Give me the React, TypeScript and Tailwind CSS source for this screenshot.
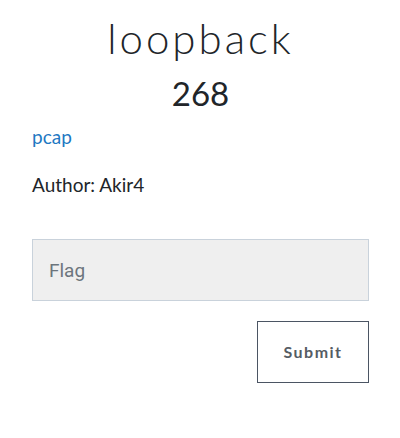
export default function App() {
  return (
    <div className="w-[400px] h-[438px] bg-white pl-8 pr-[31px] pt-[12px] font-['Lato','Liberation_Sans',sans-serif] text-[#212529]">
      <h1 className="text-center text-[42px] font-light tracking-[3px] leading-[52px]">loopback</h1>
      <h2 className="text-center text-[33px] font-normal leading-[40px] mt-[9px]">268</h2>
      <a href="#" className="block mt-[10px] text-[19px] leading-[28px] text-[#1e78c2]">pcap</a>
      <p className="mt-[20px] text-[19px] leading-[28px]">Author: Akir4</p>
      <form className="mt-[40px]" onSubmit={e => e.preventDefault()}>
        <input
          placeholder="Flag"
          className="w-full h-[62px] bg-[#efefef] border border-[#c9d2db] px-4 text-[19px] font-['Roboto',sans-serif] placeholder:text-[#6c757d] outline-none"
        />
        <div className="flex justify-end mt-[20px]">
          <button className="w-[112px] h-[62px] border border-[#4b5563] bg-white text-[16px] font-bold tracking-[1.5px] text-[#555c63]">
            Submit
          </button>
        </div>
      </form>
    </div>
  );
}
